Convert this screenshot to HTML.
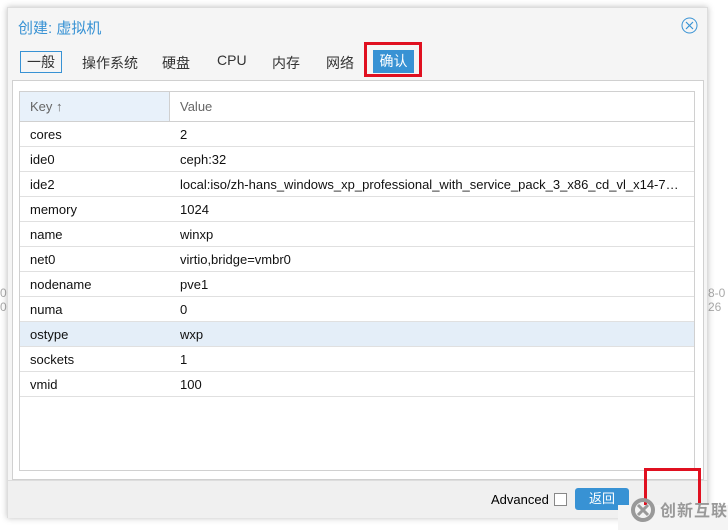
<!DOCTYPE html>
<html><head><meta charset="utf-8"><style>
*{box-sizing:border-box;margin:0;padding:0}
body{width:728px;height:530px;background:#fff;font-family:"Liberation Sans","Noto Sans CJK SC",sans-serif;position:relative;overflow:hidden;color:#000}
.dlg{position:absolute;left:7px;top:7px;width:701px;height:511px;background:#f5f5f5;border:1px solid #ddd;box-shadow:0 0 6px rgba(0,0,0,.25)}
.title{position:absolute;left:10px;top:9px;font-size:15px;color:#3892d4}
.close{position:absolute;left:673px;top:9px}
.tab{position:absolute;top:44px;font-size:14px;color:#333}
.panel{position:absolute;left:4px;top:72px;width:692px;height:400px;background:#fff;border:1px solid #d0d0d0}
.grid{position:absolute;left:6px;top:10px;width:676px;height:380px;border:1px solid #d0d0d0}
.hdr{height:30px;border-bottom:1px solid #d0d0d0;display:flex;font-size:13px;color:#666}
.hdr div{line-height:29px;padding-left:10px}
.row{height:25px;border-bottom:1px solid #e0e0e0;display:flex;font-size:13px;line-height:25px;color:#111}
.row div:first-child{width:150px;padding-left:10px}
.row div:last-child{padding-left:10px;white-space:nowrap;overflow:hidden;width:524px;text-overflow:ellipsis}
.foot{position:absolute;left:0;top:472px;width:699px;height:38px;border-top:1px solid #ddd;background:#f0f0f0}
</style></head><body>
<div style="position:absolute;left:0;top:286px;font-size:12px;color:#aaa">0<br>0</div>
<div style="position:absolute;left:708px;top:286px;font-size:12px;color:#aaa">8-0<br>26</div>
<div class="dlg">
<div class="title">创建: 虚拟机</div>
<svg class="close" width="17" height="17" viewBox="0 0 17 17"><circle cx="8.5" cy="8.5" r="7.5" fill="none" stroke="#3892d4" stroke-width="1"/><path d="M5 5L12 12M12 5L5 12" stroke="#3892d4" stroke-width="1.2"/></svg>
<div class="tab" style="left:12px;top:43px;border:1px solid #3892d4;padding:1px 6px;height:22px;line-height:18px">一般</div>
<div class="tab" style="left:74px;top:45px">操作系统</div>
<div class="tab" style="left:154px;top:45px">硬盘</div>
<div class="tab" style="left:209px;top:44px">CPU</div>
<div class="tab" style="left:264px;top:45px">内存</div>
<div class="tab" style="left:318px;top:45px">网络</div>
<div style="position:absolute;left:356px;top:34px;width:58px;height:35px;border:3px solid #e01020"></div>
<div class="tab" style="left:365px;top:42px;background:#3892d4;color:#fff;width:41px;height:23px;line-height:23px;text-align:center">确认</div>
<div class="panel"><div class="grid">
<div class="hdr"><div style="width:150px;background:#e8f1fa;border-right:1px solid #d0d0d0">Key ↑</div><div>Value</div></div>
<div class="row"><div>cores</div><div>2</div></div>
<div class="row"><div>ide0</div><div>ceph:32</div></div>
<div class="row"><div>ide2</div><div>local:iso/zh-hans_windows_xp_professional_with_service_pack_3_x86_cd_vl_x14-7…</div></div>
<div class="row"><div>memory</div><div>1024</div></div>
<div class="row"><div>name</div><div>winxp</div></div>
<div class="row"><div>net0</div><div>virtio,bridge=vmbr0</div></div>
<div class="row"><div>nodename</div><div>pve1</div></div>
<div class="row"><div>numa</div><div>0</div></div>
<div class="row" style="background:#e4eef8"><div>ostype</div><div>wxp</div></div>
<div class="row"><div>sockets</div><div>1</div></div>
<div class="row"><div>vmid</div><div>100</div></div>
</div></div>
<div class="foot">
<div style="position:absolute;left:483px;top:11px;font-size:13px">Advanced</div>
<div style="position:absolute;left:546px;top:12px;width:13px;height:13px;border:1px solid #888;background:#fff"></div>
<div style="position:absolute;left:567px;top:7px;width:54px;height:22px;background:#3892d4;border-radius:3px;color:#fff;font-size:13px;text-align:center;line-height:22px">返回</div>
</div>
</div>
<div style="position:absolute;left:644px;top:468px;width:57px;height:40px;border:3px solid #e01020;border-bottom:none"></div>
<div style="position:absolute;left:618px;top:505px;width:110px;height:25px;background:#f4f4f4"></div>
<svg style="position:absolute;left:630px;top:497px" width="26" height="26" viewBox="0 0 26 26"><circle cx="13" cy="13" r="10" fill="none" stroke="#999" stroke-width="4"/><path d="M8 8L18 18M18 8L8 18" stroke="#999" stroke-width="3"/></svg>
<div style="position:absolute;left:660px;top:497px;font-size:16px;font-weight:bold;color:#999;letter-spacing:1px">创新互联</div>
</body></html>
